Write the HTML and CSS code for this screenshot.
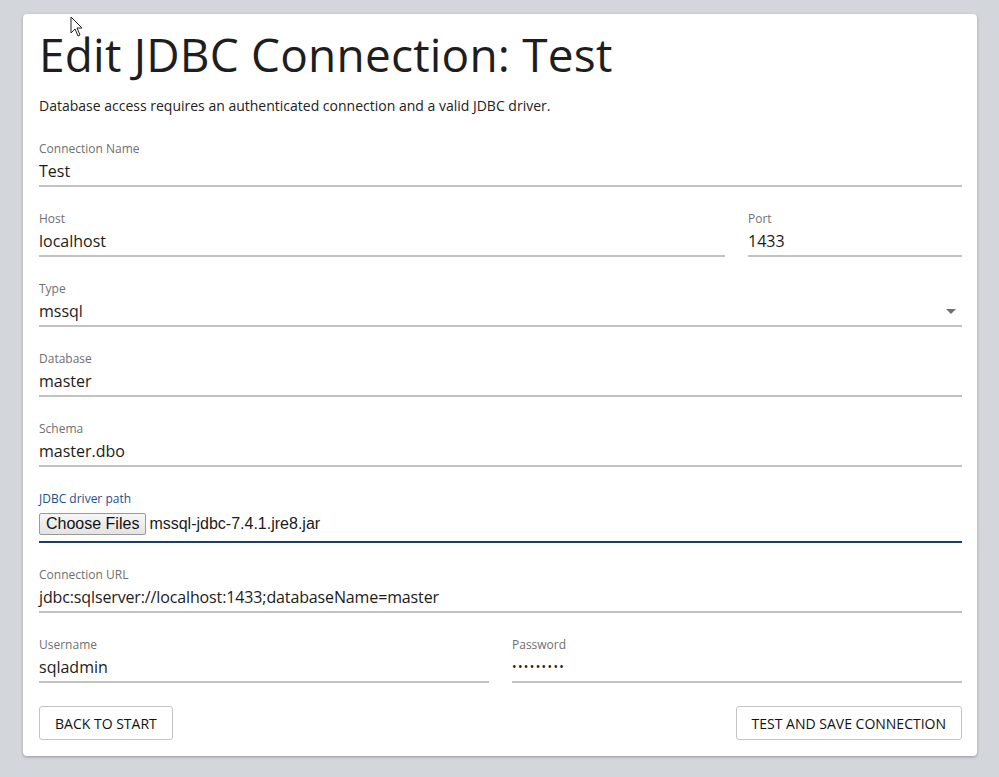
FILE: index.html
```html
<!DOCTYPE html>
<html>
<head>
<meta charset="utf-8">
<link rel="stylesheet" href="styles.css">
</head>
<body>
<div class="card">
  <h1 class="title">Edit JDBC Connection: Test</h1>
  <p class="lead">Database access requires an authenticated connection and a valid JDBC driver.</p>
  <div class="form">
    <div class="row">
      <div class="field grow"><div class="label">Connection Name</div><div class="value">Test</div></div>
    </div>
    <div class="row">
      <div class="field host"><div class="label">Host</div><div class="value">localhost</div></div>
      <div class="field port"><div class="label">Port</div><div class="value">1433</div></div>
    </div>
    <div class="row">
      <div class="field grow select"><div class="label">Type</div><div class="value">mssql</div><span class="caret"></span></div>
    </div>
    <div class="row">
      <div class="field grow"><div class="label">Database</div><div class="value">master</div></div>
    </div>
    <div class="row">
      <div class="field grow"><div class="label">Schema</div><div class="value">master.dbo</div></div>
    </div>
    <div class="row">
      <div class="field grow focused"><div class="label">JDBC driver path</div><div class="value file"><span class="choose">Choose Files</span><span class="fname">mssql-jdbc-7.4.1.jre8.jar</span></div></div>
    </div>
    <div class="row">
      <div class="field grow"><div class="label">Connection URL</div><div class="value url">jdbc:sqlserver://localhost:1433;databaseName=master</div></div>
    </div>
    <div class="row">
      <div class="field half"><div class="label">Username</div><div class="value">sqladmin</div></div>
      <div class="field half"><div class="label">Password</div><div class="value dots">•••••••••</div></div>
    </div>
  </div>
  <div class="actions">
    <button class="btn">BACK TO START</button>
    <button class="btn">TEST AND SAVE CONNECTION</button>
  </div>
</div>
<svg class="cursor" width="14" height="22" viewBox="0 0 14 22"><path d="M1 1 L1 17 L5 13 L8 20 L10 19 L7 12 L12 12 Z" fill="#fff" stroke="#222" stroke-width="1"/></svg>
</body>
</html>
```
FILE: styles.css
```css
html, body { margin: 0; padding: 0; }
body {
  background: #d3d6db;
  font-family: "Open Sans", "Noto Sans", sans-serif;
  color: #222;
  width: 999px;
  height: 777px;
  overflow: hidden;
}
.card {
  margin: 14px 0 0 23px;
  width: 954px;
  height: 742px;
  box-sizing: border-box;
  background: #fff;
  border-radius: 4px;
  box-shadow: 0 1px 3px rgba(0,0,0,0.3);
  padding: 0 15px 0 16px;
  display: flex;
  flex-direction: column;
}
.title {
  margin: 12px 0 0 0;
  font-size: 46px;
  font-weight: 400;
  line-height: 56px;
  color: #1e1e1e;
  letter-spacing: 0.2px;
}
.lead {
  margin: 14px 0 0 0;
  font-size: 14px;
  line-height: 20px;
  color: #222;
}
.form {
  margin-top: 25px;
  display: flex;
  flex-direction: column;
  gap: 24px;
}
.row { display: flex; gap: 23px; }
.field {
  position: relative;
  border-bottom: 2px solid #c2c2c2;
  padding-bottom: 2px;
}
.grow { flex: 1; }
.host { flex: 1; }
.port { width: 214px; }
.half { flex: 1; }
.label {
  font-size: 12px;
  line-height: 16px;
  color: #6f6f6f;
}
.value {
  font-size: 16px;
  line-height: 24px;
  margin-top: 2px;
  color: #1b1b1b;
}
.url { letter-spacing: -0.13px; }
.dots { font-size: 12px; letter-spacing: 1.4px; }
.caret {
  position: absolute;
  right: 6px;
  top: 28px;
  width: 0; height: 0;
  border-left: 5px solid transparent;
  border-right: 5px solid transparent;
  border-top: 5px solid #707070;
}
.focused { border-bottom-color: #1d3f66; }
.focused .label { color: #1f4f87; }
.file {
  display: flex;
  align-items: center;
  height: 30px;
}
.choose {
  font-family: "Liberation Sans", Arial, sans-serif;
  font-size: 16px;
  line-height: 20px;
  padding: 0 6px;
  border: 1px solid #9a9a9a;
  border-radius: 2px;
  background: linear-gradient(#f6f6f6, #e3e3e3);
  color: #111;
}
.fname {
  font-family: "Liberation Sans", Arial, sans-serif;
  font-size: 16px;
  margin-left: 3px;
}
.actions {
  margin-top: 23px;
  display: flex;
  justify-content: space-between;
}
.btn {
  font-family: "Open Sans", "Noto Sans", sans-serif;
  font-size: 14px;
  color: #111;
  background: #fff;
  border: 1px solid #c4c4c4;
  border-radius: 3px;
  height: 34px;
  padding: 0 15px;
}
.cursor {
  position: absolute;
  left: 70px;
  top: 16px;
}
```
